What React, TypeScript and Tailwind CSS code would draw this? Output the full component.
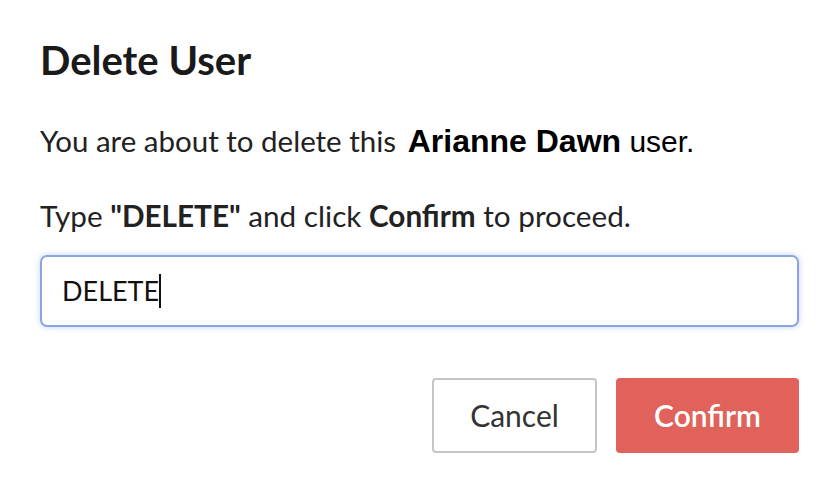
export default function App() {
  return (
    <div className="w-[831px] h-[482px] bg-white pt-[36px] pl-[40px] pr-[32px] font-['Lato','Noto_Sans',sans-serif] text-[#222]">
      <h1 className="text-[40px] leading-[48px] font-bold text-[#1a1a1a]">Delete User</h1>

      <p className="mt-[39px] text-[29.5px] leading-[36px]">
        You are about to delete this{' '}
        <span className="ml-[4px] font-['Liberation_Sans',Arial,sans-serif] font-bold text-[32px] text-black">Arianne Dawn</span>
        <span className="font-['Liberation_Sans',Arial,sans-serif] text-[30px] text-black"> user.</span>
      </p>

      <p className="mt-[38px] text-[29.7px] leading-[36px]">
        Type <b className="font-bold">"DELETE"</b> and click <b className="font-bold">Confirm</b> to proceed.
      </p>

      <div className="mt-[21px] h-[72px] w-[759px] rounded-[7px] border-2 border-[#8ba5e0] shadow-[0_0_6px_rgba(120,150,230,0.45)] flex items-center pl-[20px]">
        <span className="text-[27px] text-[#111]">DELETE</span>
        <span className="w-[2px] h-[34px] bg-[#111]" />
      </div>

      <div className="mt-[51px] flex justify-end gap-[19px] w-[759px]">
        <button className="w-[165px] h-[75px] rounded-[4px] border-2 border-[#c6c6c6] bg-white text-[30px] text-[#333]">
          Cancel
        </button>
        <button className="w-[183px] h-[75px] rounded-[4px] bg-[#e0625a] text-[30px] font-semibold text-white">
          Confirm
        </button>
      </div>
    </div>
  );
}
